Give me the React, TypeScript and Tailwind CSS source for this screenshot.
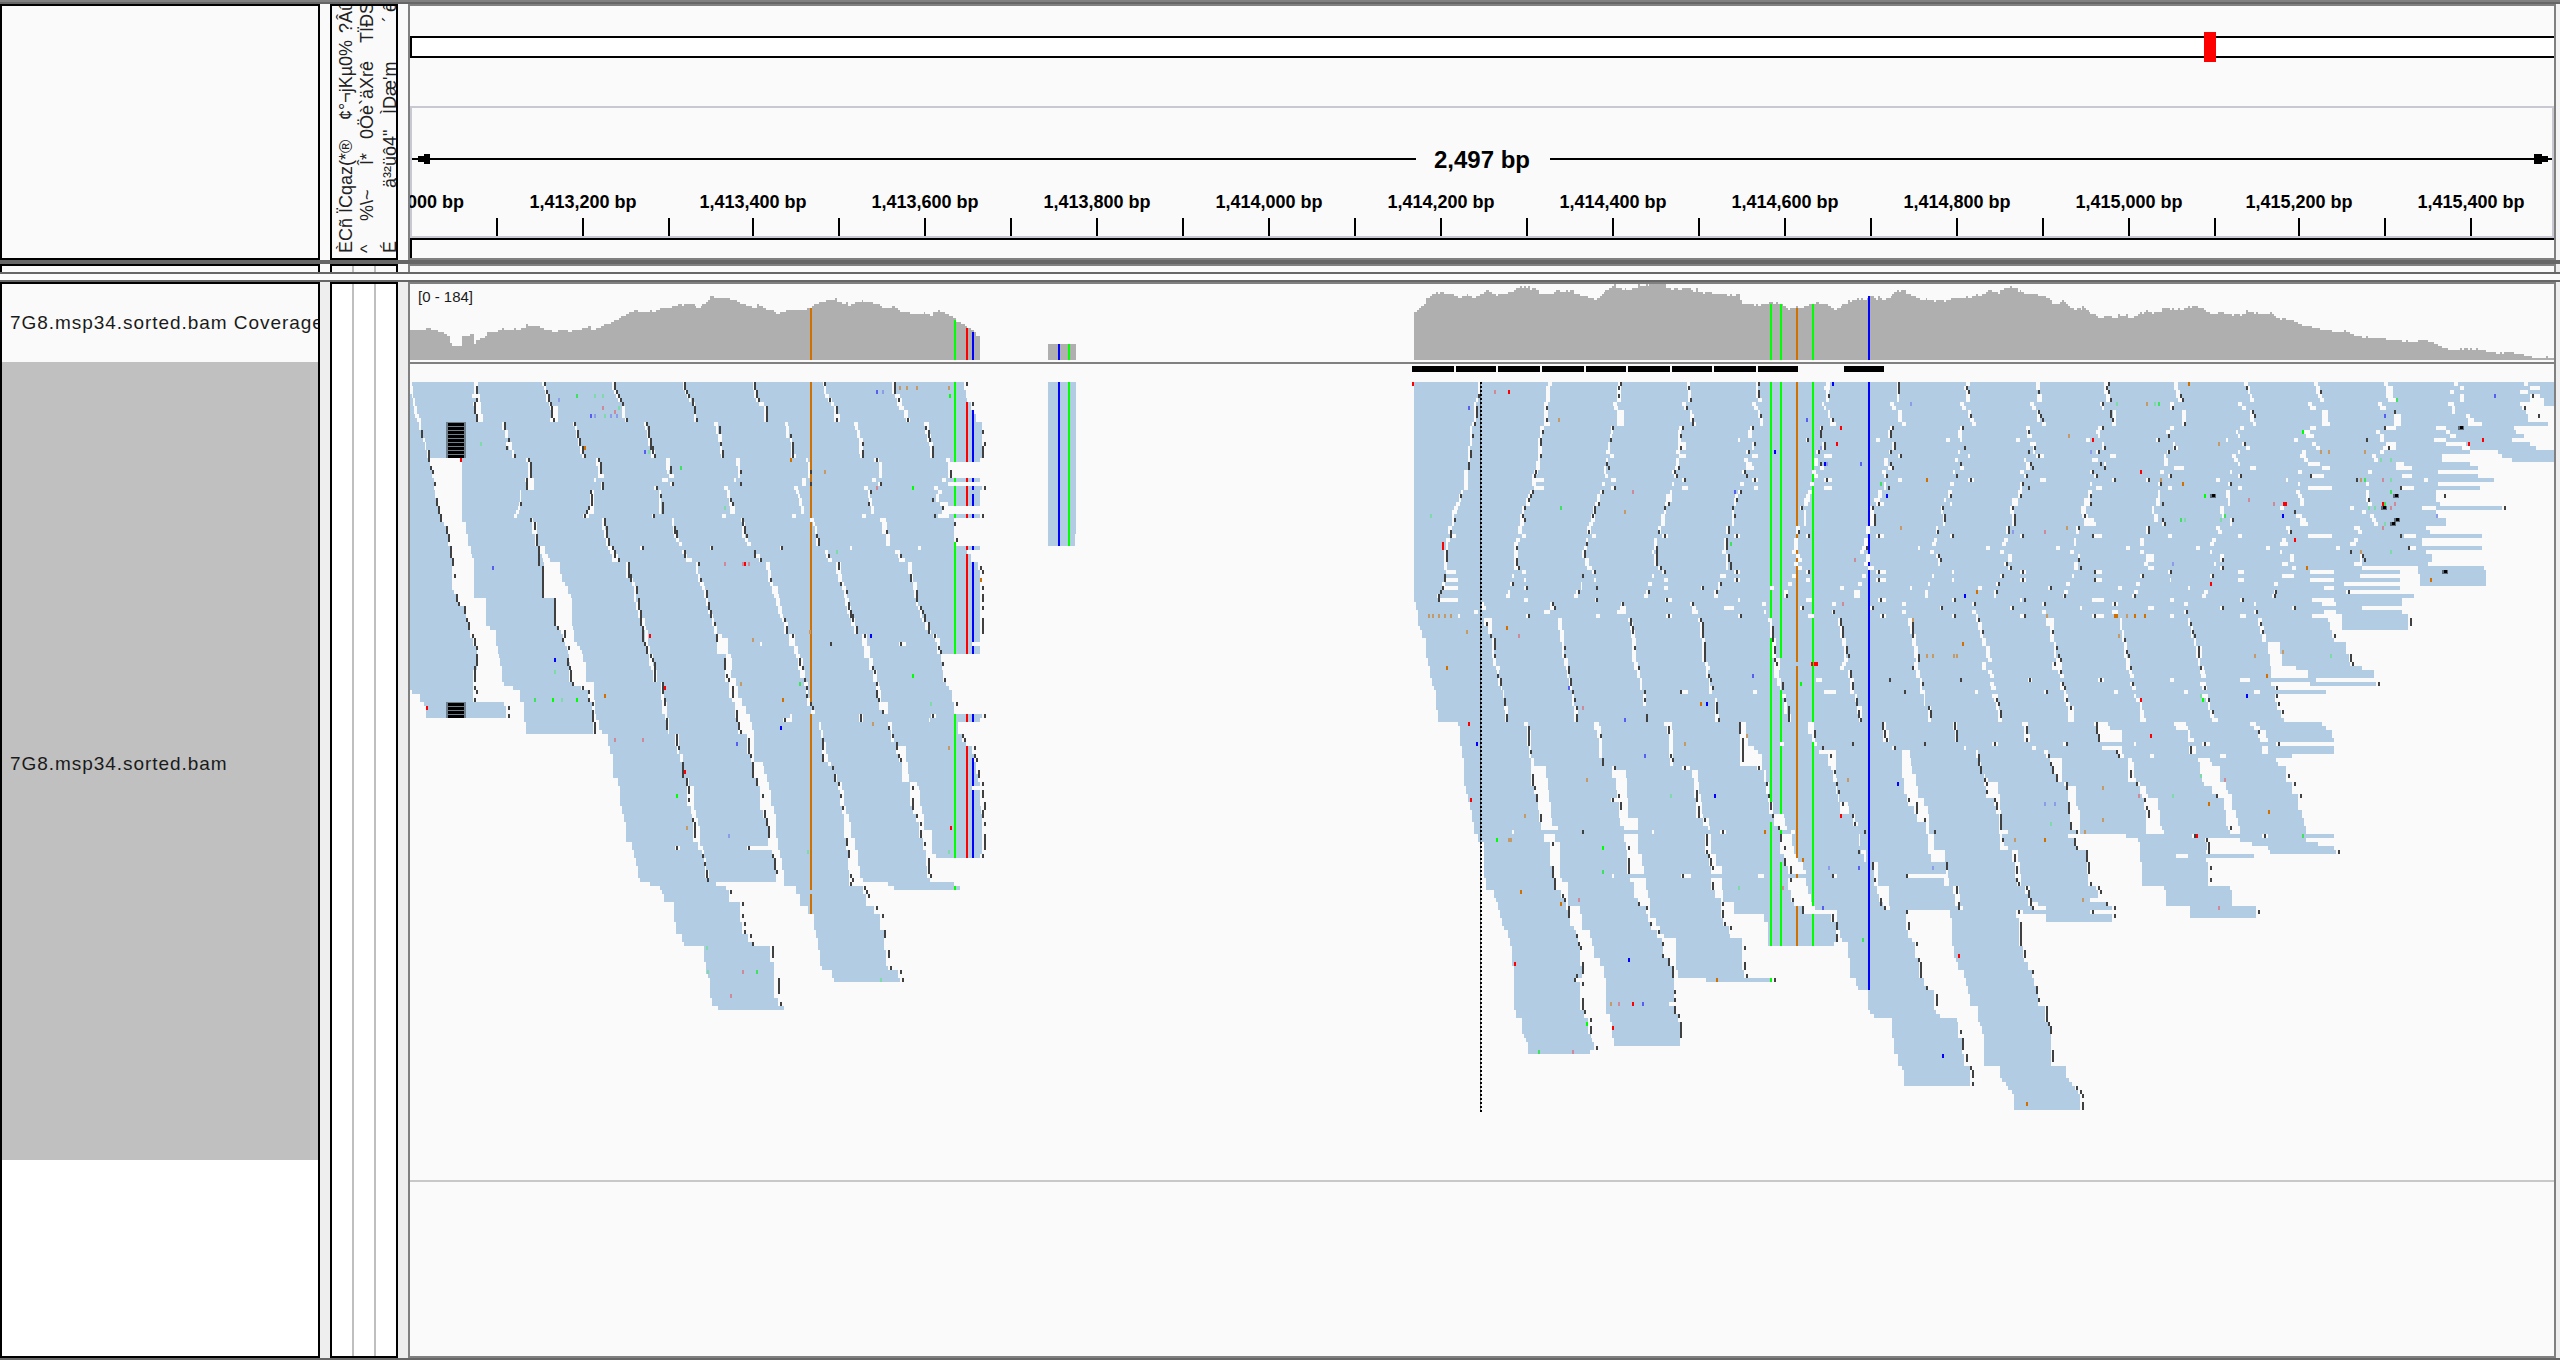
import React from "react";

/* A tile is a piece of the genome window with its own origin and scale. */
type Tile = { x: number; y: number; s: number };
const A: Tile = { x: 400, y: 270, s: 2.24 };
const B: Tile = { x: 400, y: 640, s: 2.24 };
const C: Tile = { x: 1390, y: 270, s: 1568 / 600 };
const D: Tile = { x: 1390, y: 650, s: 2.24 };
const E: Tile = { x: 1960, y: 270, s: 1568 / 600 };
const F: Tile = { x: 1960, y: 640, s: 1568 / 600 };

const nums = (s: string) => (s.match(/\d+/g) || []).map(Number);
const px = (t: Tile, v: number) => Math.round(t.x + v / t.s);
const py = (t: Tile, v: number) => Math.round(t.y + v / 3);
const rect = (x0: number, y0: number, x1: number, y1: number) => `M${x0} ${y0}H${x1}V${y1}H${x0}Z`;

/* "y left right y left right ... yEnd", several runs split by "|" */
const bands = (t: Tile, src: string) =>
  src
    .split("|")
    .map((run) => {
      const n = nums(run);
      let d = "";
      for (let i = 0; i + 3 < n.length; i += 3) {
        if (n[i + 2] > n[i + 1]) d += rect(px(t, n[i + 1]), py(t, n[i]), px(t, n[i + 2]), py(t, n[i + 3]));
      }
      return d;
    })
    .join("");

/* "x y height ..." two pixel wide marks centred on x */
const ticks = (t: Tile, src: string) => {
  const n = nums(src);
  let d = "";
  for (let i = 0; i + 2 < n.length; i += 3) {
    const x = px(t, n[i]) - 1;
    d += rect(x, py(t, n[i + 1]), x + 2, py(t, n[i + 1] + n[i + 2]));
  }
  return d;
};

/* "x top x top ... xEnd" histogram standing on y = 360 */
const hist = (t: Tile, src: string) => {
  const n = nums(src);
  let d = "";
  for (let i = 0; i + 2 < n.length; i += 2) d += rect(px(t, n[i]), py(t, n[i + 1]), px(t, n[i + 2]), 360);
  return d;
};

const coverage =
  hist(A, "22 180 58 175 70 180 85 186 98 192 105 198 112 220 116 228 139 198 156 193 166 222 170 210 180 204 190 198 194 186 220 180 229 174 234 180 256 174 260 180 270 174 282 163 287 168 314 174 323 180 341 186 354 180 377 186 386 180 408 174 422 168 427 180 440 174 450 168 458 162 472 156 480 150 490 144 495 138 507 132 513 126 524 120 533 126 560 120 565 126 573 120 582 114 610 108 623 102 632 108 636 102 660 108 663 114 674 108 677 102 686 96 690 90 695 78 703 84 740 90 755 96 762 102 776 108 789 114 800 102 805 108 812 114 820 120 838 126 843 132 852 126 865 120 911 114 922 108 928 102 938 96 955 90 975 84 978 96 990 102 1000 96 1003 108 1010 102 1020 96 1034 90 1038 96 1060 102 1076 108 1080 114 1103 108 1108 114 1116 120 1121 126 1142 132 1173 126 1177 132 1188 138 1195 126 1205 120 1210 126 1220 132 1230 138 1238 144 1245 156 1256 162 1265 168 1270 174 1278 180 1286 186 1290 198 1299") +
  hist(A, "1452 222 1514") +
  hist(C, "63 126 70 120 75 114 80 108 90 102 95 84 105 78 110 72 120 66 125 72 131 66 140 72 167 78 178 84 188 78 200 72 204 78 215 84 225 78 235 72 245 66 252 60 260 66 266 72 277 78 282 72 308 66 325 60 330 54 340 48 345 54 350 48 355 54 360 48 365 60 372 54 381 60 390 72 428 66 435 60 444 66 461 60 465 66 470 60 481 72 497 78 517 84 533 90 540 84 548 78 555 72 558 66 562 60 572 54 580 48 585 42 590 54 605 60 613 54 618 60 632 54 648 42 653 48 668 42 673 48 677 42 721 54 735 60 742 54 752 60 763 54 787 60 793 66 800 54 806 66 818 72 823 66 842 72 880 78 888 72 893 78 905 72 914 90 920 102 950 108 956 102 961 108 970 102 990 96 1000 102 1008 96 1015 102 1027 108 1034 114 1040 120 1045 114 1060 108 1066 114 1083 108 1095 102 1112 96 1120 102 1145 108 1153 114 1160 120 1167 114 1178 108 1181 102 1197 90 1202 96 1208 90 1220 84 1225 90 1232 84 1236 90 1246 84 1254 78 1265 84 1270 90 1275 78 1280 84 1286 90 1295 84 1308 78 1313 72 1318 66 1325 60 1330 66 1335 60 1348 72 1362 78 1375 84 1386 90 1400 84 1404 90 1422 96 1427 90 1448 96 1454 90 1465 84 1490") +
  hist(E, "0 84 16 78 21 84 32 78 42 72 47 78 58 72 69 66 74 60 83 66 98 72 105 60 115 54 131 48 136 54 151 66 157 60 159 66 168 72 204 78 225 84 235 90 240 102 262 96 267 90 272 96 278 102 282 108 288 114 299 120 305 114 315 120 320 108 325 114 330 120 336 126 341 132 355 138 361 144 377 138 398 144 413 132 418 138 434 132 439 144 455 138 465 132 471 126 476 132 481 126 486 120 491 126 502 132 507 126 528 114 550 120 555 114 560 120 570 114 576 120 586 114 597 108 602 114 607 108 622 114 638 120 643 126 653 132 673 126 690 132 711 138 717 132 732 138 738 132 747 120 753 126 768 132 773 126 778 132 810 126 815 132 821 138 826 144 836 150 841 144 852 150 873 156 883 162 894 168 920 174 941 180 972 186 1003 180 1009 186 1019 192 1030 198 1050 204 1062 198 1066 204 1113 210 1155 216 1166 210 1171 216 1197 210 1223 216 1238 222 1249 228 1260 234 1275 240 1307 234 1312 240 1317 234 1328 240 1333 234 1338 240 1349 234 1354 240 1375 246 1401 252 1411 246 1416 252 1422 246 1448 252 1474 258 1495 264 1532 258 1537 264 1552");

const reads =
  bands(A, "336 22 1264 360 22 1267 384 22 1270 396 22 1278 420 22 1286 432 22 1290 456 22 1304 564 22 1299 576 22 1230 624 22 1299 636 22 1228 648 22 1304 660 22 1299 708 22 1213 732 22 1299 744 22 1240 816 22 1245 828 22 1299 840 22 1270 852 22 1278 876 22 1295 900 22 1299 1116 22 1281 1128 22 1299 1152 22 1212 1176 22 1215 1200 | 336 1452 1514 792 1452 1511 828") +
  bands(B, "90 22 163 150 27 163 162 45 163 186 54 233 198 58 237 234 | 90 228 379 126 233 388 138 254 405 150 269 420 186 278 430 246 282 432 282") +
  bands(B, "90 417 567 126 435 585 180 437 587 222 440 594 240 445 598 270 452 600 282 466 616 318 470 621 342 478 628 366 478 632 414 488 641 438 492 643 498 497 652 522 502 654 546 506 656 606 520 668 630 524 676 654 529 680 678 533 684 714 538 690 726 560 708 738 582 730 750 587 738 762 591 738 786 614 762 846 618 767 882 632 780 906 636 789 918 681 829 966 686 838 1002 691 838 1014 694 838 1074 699 847 1098 712 860 1110") +
  bands(B, "90 576 728 126 591 738 174 596 744 186 598 751 234 602 756 282 625 778 342 635 786 366 636 788 414 648 799 438 659 806 510 663 813 534 668 820 558 672 824 618 678 777 630 682 833 654 686 837 690 693 842 726") +
  bands(B, "90 742 897 114 752 905 138 757 909 174 765 912 198 774 920 222 783 930 246 788 938 270 793 942 294 793 945 366 812 958 378 815 967 402 822 972 426 826 981 450 831 986 498 838 990 522 842 994 594 847 999 630 851 1003 654 856 1003 690 860 1005 738 887 1036 762 896 1044 798 914 1062 822 927 1075 870 932 1084 894 936 1084 930 941 1089 978 945 1093 990 968 1116 1014 972 1120 1026") +
  bands(B, "90 908 1060 126 914 1066 174 920 1072 210 930 1081 246 942 1092 270 948 1099 306 954 1110 342 959 1118 366 966 1124 402 978 1124 426 991 1142 450 995 1143 498 1000 1150 522 1006 1156 546 1011 1163 594 1020 1172 630 1026 1178 678 1030 1181 714 1038 1187 726 1093 1241 738 1107 1254 750") +
  bands(B, "90 1068 1216 126 1072 1224 138 1076 1230 150 1078 1236 186 1093 1240 222 1070 1304 234 1070 1299 246 1101 1250 282 1106 1258 306 1115 1268 318 1133 1281 342 1133 1286 366 1138 1290 402 1140 1295 426 1157 1299 438 1162 1281 450 1164 1299 498 1170 1302 522 1174 1304 570 1192 1304 642 1201 1299 654") +
  bands(C, "336 63 1490 996 68 1490 1020 73 1490 1068 79 1490 1080 84 1490 1104 94 1490 1164 99 1490 1188 104 1490 1200") +
  bands(D, "60 89 239 84 94 243 108 99 249 120 103 252 144 103 256 180 108 258 216 152 301 228 156 307 288 161 312 324 165 315 348 165 316 408 170 323 432 174 327 456 179 331 480 183 334 516 188 338 540 188 376 552 197 345 576 210 358 648 210 363 684 215 367 720 233 383 744 237 390 756 242 394 780 246 399 804 251 403 828 255 413 840 264 417 864 269 421 888 273 426 948 278 430 984 278 412 996 278 426 1080 282 434 1104 296 443 1152 300 450 1164 305 453 1176 309 457 1200 309 448 1212") +
  bands(D, "60 245 396 84 250 400 120 256 408 168 264 413 216 310 458 240 315 464 264 315 469 324 322 474 348 349 498 384 354 506 420 357 508 444 357 494 456 360 512 504 362 516 528 376 525 540 362 555 552 370 524 576 380 529 600 381 530 684 386 538 696 398 546 744 399 556 768 425 573 792 429 578 816 429 584 840 447 597 864 452 610 888 456 612 924 470 624 948 480 631 984 484 636 1056 484 624 1068 484 636 1092 493 645 1116 497 650 1164 502 650 1188") +
  bands(D, "60 402 554 84 407 560 120 412 567 168 420 573 216 468 614 228 472 620 252 474 625 324 480 627 348 505 654 360 529 676 384 530 682 444 533 686 504 555 702 528 555 712 552 556 706 612 564 714 648 568 720 684 573 718 720 578 729 744 582 742 804 596 747 828 605 760 852 614 762 864 641 788 960 645 793 984 708 853 996") +
  bands(D, "60 560 708 84 565 714 132 573 728 216 632 781 240 635 785 348 672 821 360 690 838 396 692 843 432 697 847 456 699 850 492 700 856 504 714 861 528 717 870 552 720 874 612 730 882 648 743 892 684 743 892 720 747 899 756 771 905 768 771 923 792 838 988 816 847 998 876 847 995 888") +
  bands(D, "60 712 860 84 716 867 108 721 873 144 732 882 192 738 892 216 797 937 252 802 946 288 815 956 300 824 960 312 833 981 348 833 988 360 843 992 396 848 1000 432 853 1003 456 858 1008 492 883 1034 504 885 1038 528 890 1048 540 890 1060 552 901 1050 588 906 1056 612 915 1062 636 925 1079 660 931 1084 708 936 1090 732 943 1095 756 950 1104 768 953 1110 780") +
  bands(D, "216 738 781 | 216 575 614 240 575 620 252 575 625 348 | 216 420 458 240 420 464 264 420 469 324 420 474 348 420 498 360 | 216 264 301 | 216 898 937 | 540 188 940 552 | 672 386 960 684") +
  bands(D, "780 1002 1156 840 1007 1160 864 1012 1169 876 1026 1176 924 1030 1185 984 1044 1197 1008 1048 1205 1020 1071 1219 1080 1075 1224 1092 1084 1232 1104 1124 1270 1116 1124 1272 1164 1129 1281 1212 1138 1286 1248 1147 1299 1260 1151 1299 1308") +
  bands(D, "60 871 1026 84 876 1030 132 886 1042 156 890 1046 192 898 1050 216 950 1101 240 953 1104 276 957 1120 300 998 1147 384 1001 1151 432 1006 1157 456 1026 1160 468 1028 1174 492 1042 1180 516 1048 1200 552 1053 1205 600 1066 1206 612 1066 1212 636 1092 1245 672 1092 1156 684 1094 1242 708 1117 1262 732 1118 1266 768 1119 1272 780") +
  bands(D, "60 1035 1178 84 1040 1188 132 1045 1196 168 1057 1204 216 1112 1262 240 1117 1265 276 1117 1310 300 1164 1313 324 1167 1318 348 1170 1324 372 1178 1330 408 1182 1336 444 1196 1354 468 1204 1358 492 1208 1364 552 1218 1366 600 1243 1394 636 1251 1400 684 1253 1404 708 1274 1422 732 1277 1430 768 1284 1438 780 1254 1402 804 1258 1408 888 1263 1417 924 1268 1420 936 1272 1428 960 1286 1438 984 1290 1442 1008 1295 1446 1032 1299 1452 1068 1317 1468 1116 1322 1473 1128 1326 1478 1152 1331 1480 1248 1366 1514 1284 1370 1520 1296 1380 1528 1308 1384 1534 1320 1393 1542 1332 1398 1546 1380") +
  bands(D, "60 1187 1333 84 1192 1343 120 1198 1348 168 1211 1365 216 1270 1420 276 1272 1420 300") +
  bands(E, "336 0 1552 408 0 1510 432 0 1515 456 0 1536 468 0 1448 480 0 1453 492 0 1473 504 0 1443 516 0 1490 528 0 1505 540 0 1333 552 0 1260 576 0 1333 588 0 1354 600 0 1249 612 0 1354 624 0 1396 636 0 1249 648 0 1359 660 0 1244 696 0 1254 708 0 1416 720 0 1244 744 0 1270 768 0 1218 780 0 1228 792 0 1364 804 0 1208 828 0 1364 840 0 1218 852 0 1233 876 0 1223 888 0 1050 900 0 1150 912 0 1045 924 0 1150 936 0 1004 948 0 1150 960 0 1010 972 0 1186 984 0 1155 1008 0 1050 1020 0 1155 1032 0 1171 1080 0 972 1104 0 978 1116 0 1009 1152 0 1016 1176 0 1020 1188 0 1050 1200 | 540 1406 1552 552 1417 1552 564 1443 1552 576 | 888 1197 1369 900 1197 1375 912 1202 1375 948") +
  bands(F, "90 60 1082 114 60 930 126 60 1087 138 60 822 150 60 956 162 60 824 186 60 828 210 60 838 234 60 847 246 0 946 258 0 956 270 0 972 294 0 977 306 0 827 318 0 977 330 47 977 342 52 868 354 52 827 366 54 831 378 57 852 402 65 852 414 73 852 426 99 868 462 104 883 510 106 894 534 108 899 558 110 904 570 125 904 582") +
  bands(F, "582 110 283 594 116 298 618 125 304 630 152 329 666 156 331 702 159 335 738 183 356 750 184 361 774 188 340 786 204 381 798 225 397 810 165 340 822 225 397 846 | 582 434 977 594 465 640 606 470 645 630 470 643 642 470 768 654 470 643 666 476 648 738 533 706 750 538 711 798 601 774 834 | 594 732 904 606 763 936 618 805 977 630 810 983 642");

const gaps =
  bands(A, "336 22 27 348 22 28 372 26 30 384 28 33 408 31 37 432 34 43 444 37 46 456 43 48 480 46 50 504 52 57 516 55 59 540 60 65 564 68 139 600 72 139 624 76 139 660 79 139 684 83 139 708 87 139 732 92 139 756 99 148 768 103 148 792 108 152 828 113 159 852 115 161 864 118 166 888 116 166 960 121 166 972 126 166 984 130 193 996 134 193 1008 144 193 1032 148 193 1056 152 193 1068 157 202 1080 157 215 1104 163 215 1128 172 220 1152 175 222 1164 175 224 1188 172 228 1200") +
  bands(A, "336 166 175 348 166 170 372 161 179 384 170 179 396 163 181 408 170 181 432 170 187 456 229 235 480 236 242 504 241 246 516 238 250 528 245 250 540 250 255 564 283 291 576 287 292 624 281 300 636 287 300 660 268 272 696 266 273 708 264 269 720 260 266 732 255 261 744 292 298 756 296 306 792 303 309 828 310 325 852 318 332 864 320 335 876 323 358 912 323 363 936 323 370 948 323 376 972 323 382 984 344 385 1068 352 388 1080 360 390 1092 366 390 1116 370 396 1128 374 404 1140 376 408 1152 378 411 1176 381 417 1200") +
  bands(A, "336 318 328 348 322 327 360 325 331 372 326 336 396 333 341 408 337 354 420 343 354 444 337 354 456 387 395 468 391 397 480 395 399 504 399 403 528 403 408 552 407 417 564 440 447 588 443 452 612 443 457 624 434 439 636 450 457 660 426 434 684 426 435 708 421 434 732 410 423 744 453 459 780 457 463 804 462 471 828 466 476 840 471 480 852 474 489 876 506 510 924 515 523 936 520 526 948 524 529 996 529 533 1020 533 537 1044 543 548 1068 547 552 1080 549 556 1128 556 560 1152 558 567 1188 562 570 1200") +
  bands(A, "336 475 480 360 479 484 372 484 488 384 489 494 396 497 502 408 497 505 444 504 509 456 547 552 468 549 554 480 553 558 504 556 561 528 560 565 540 563 572 564 596 604 600 598 603 612 602 614 624 587 600 636 605 609 648 570 573 660 580 585 732 564 568 744 609 614 768 612 617 792 614 619 804 619 624 816 624 632 828 537 541 840 632 640 852 636 643 864 641 654 876 663 668 912 667 672 936 671 680 948 677 683 960 682 686 984 685 690 1008 689 695 1032 694 700 1044 699 704 1068 703 709 1092 712 721 1104 710 735 1152 731 742 1164 731 744 1200") +
  bands(A, "336 633 638 348 635 640 360 639 644 372 643 648 384 647 652 396 655 660 408 658 663 456 703 713 468 708 712 492 712 721 516 716 722 552 719 726 564 753 761 588 757 761 624 749 753 636 762 766 648 726 735 660 732 740 684 736 743 708 740 750 732 722 730 744 764 768 756 767 773 804 772 780 816 778 787 828 694 697 840 792 798 852 797 806 864 805 810 876 820 828 900 824 830 936 829 835 948 834 847 972 838 848 984 842 852 1008 847 856 1032 851 859 1044 855 864 1056 860 870 1092 872 884 1128 883 892 1152 888 895 1164 892 903 1200") +
  bands(A, "336 790 794 360 793 797 384 798 806 396 805 815 408 815 820 456 862 870 468 865 872 504 873 877 516 875 880 552 876 886 564 910 914 576 914 918 624 900 909 648 883 892 660 888 894 672 892 897 684 894 900 708 898 905 732 878 887 744 918 927 756 925 930 768 929 934 792 932 937 828 851 855 840 951 959 852 955 963 864 959 967 876 977 988 912 982 990 936 986 995 948 990 999 960 995 1001 984 997 1006 1008 1001 1010 1032 1006 1014 1044 1010 1019 1068 1018 1026 1092 1034 1046 1128 1040 1052 1164 1050 1060 1200") +
  bands(A, "336 947 952 348 950 955 372 953 961 384 958 967 396 965 972 408 972 982 432 972 986 456 1017 1026 468 1020 1027 480 1024 1031 504 1028 1036 552 1031 1040 564 1062 1072 576 1072 1080 624 1057 1066 636 1070 1075 648 1039 1048 660 1048 1053 684 1050 1057 708 1054 1062 732 1035 1044 744 1076 1089 756 1080 1090 792 1089 1097 828 1007 1012 840 1108 1121 852 1116 1122 864 1117 1131 876 1139 1147 912 1142 1150 936 1148 1157 960 1151 1157 984 1156 1161 1008 1160 1166 1020 1164 1170 1044 1170 1176 1056 1177 1182 1080 1184 1190 1092 1194 1202 1104 1198 1210 1116 1202 1210 1152") +
  bands(A, "336 1102 1107 372 1108 1121 384 1114 1125 408 1118 1130 420 1130 1138 444 1134 1142 456 1174 1184 468 1176 1184 492 1181 1189 516 1186 1193 528 1188 1196 564 1224 1233 576 1228 1233 624 1214 1222 636 1228 1299 648 1197 1206 660 1204 1213 672 1200 1208 696 1210 1228 708 | 828 1160 1168 840 | 1116 1118 1133 1128 | 1116 806 811 1128 | 732 1204 1230 744") +
  bands(B, "618 784 829 630 | 222 874 878 234 858 878 246 | 222 1028 1036 246 | 222 1190 1200 234 1184 1188 246 | 618 616 627 630") +
  bands(C, "336 230 235 384 225 230 396 220 226 444 219 224 456 214 220 468 210 215 504 209 214 528 204 210 564 203 208 600 193 203 648 193 204 660 185 192 672 180 186 696 173 183 708 167 178 720 162 175 732 162 168 768 152 162 792 157 172 804 147 157 816 146 152 840 142 148 900 146 172 912 140 144 924 146 178 936 135 143 948 138 178 960 130 135 972 122 130 984 131 178 996 240 245 1008 240 250 1020 220 230 1032 178 183 1044 246 267 1068 256 266 1092 261 267 1104 267 273 1164 270 278 1188 277 287 1200") +
  bands(C, "336 412 423 348 408 418 396 402 412 432 403 413 456 402 418 468 392 402 480 392 397 504 387 397 564 387 392 572 382 392 600 376 387 612 371 382 624 371 402 636 371 382 648 376 402 660 365 371 672 361 371 684 356 366 708 345 351 732 340 350 768 335 345 792 345 355 804 330 340 816 324 335 888 324 340 900 345 355 912 319 324 924 350 355 936 313 319 948 350 355 960 308 313 972 303 313 984 350 361 996 418 423 1008 418 430 1020 402 418 1032 355 361 1044 439 450 1080 444 455 1116 450 455 1164 455 465 1188 460 468 1200") +
  bands(C, "336 597 605 348 592 603 396 582 592 408 586 597 420 592 612 468 577 583 492 575 580 516 570 575 540 564 575 552 576 586 564 564 570 588 559 565 612 562 570 624 577 591 636 555 562 648 577 591 660 550 556 672 540 550 696 535 545 708 530 535 732 524 535 756 519 530 768 514 524 792 528 538 804 512 518 828 507 515 840 503 508 864 509 519 888 514 528 900 528 538 912 502 507 924 533 538 936 499 503 960 487 492 972 482 492 984 535 543 996 603 610 1008 602 617 1020 592 617 1032 538 549 1044 622 629 1056 627 634 1080 629 640 1104 632 642 1176 637 648 1200") +
  bands(C, "336 776 784 360 780 786 396 763 774 408 768 778 420 783 789 432 784 795 456 790 800 468 756 763 480 752 760 516 752 773 540 748 757 552 756 773 564 748 754 588 746 757 600 737 743 612 742 752 624 762 768 636 736 742 648 763 778 660 732 737 672 721 737 696 719 731 708 715 721 732 707 719 768 701 707 792 712 727 804 690 697 840 685 691 852 690 696 888 701 712 900 711 721 912 685 690 924 716 726 936 674 685 948 716 726 960 669 675 972 664 674 984 719 736 996 784 790 1008 790 799 1020 790 805 1032 721 737 1044 806 815 1056 811 817 1104 816 822 1176 822 832 1188 826 837 1200") +
  bands(C, "336 956 962 384 961 971 396 946 956 408 951 961 420 961 966 444 966 976 468 941 946 480 936 946 504 909 914 516 945 950 540 930 935 552 946 962 564 925 936 576 930 945 588 930 950 600 920 930 612 930 936 624 945 962 636 915 925 648 951 962 660 910 916 672 901 909 684 899 903 708 893 899 768 878 883 792 899 914 804 873 878 840 868 878 852 878 883 900 899 914 912 862 878 924 899 914 936 857 863 960 847 857 984 909 914 996 972 982 1008 873 899 1020 977 982 1032 909 914 1044 988 998 1056 993 998 1104 998 1008 1164 1003 1018 1200 | 948 993 1003 960 | 948 812 820 960") +
  bands(C, "336 1140 1150 348 1135 1150 360 1140 1146 396 1129 1134 408 1135 1140 420 1145 1151 444 1151 1160 456 1151 1165 468 1124 1130 504 1087 1092 516 1129 1135 540 1114 1120 552 1135 1155 564 1108 1119 588 1124 1134 600 1103 1113 612 1108 1119 624 1135 1155 636 1098 1108 648 1134 1155 660 1093 1103 672 1087 1098 684 1082 1098 696 1082 1093 708 1072 1077 720 1081 1087 768 1061 1071 792 1087 1097 804 1056 1066 840 1051 1061 852 1061 1071 864 1066 1077 876 1056 1066 888 1066 1077 900 1088 1098 912 1051 1061 924 1088 1098 936 1040 1051 948 1175 1186 960 1030 1040 984 1087 1103 996 1156 1166 1008 1072 1078 1020 1155 1160 1032 1092 1108 1044 1171 1177 1068 1175 1181 1104 1182 1192 1128 1187 1192 1164 1187 1197 1176 1182 1192 1188 1177 1187 1200") +
  bands(C, "336 1325 1330 396 1307 1318 408 1313 1323 420 1328 1339 456 1339 1349 468 1307 1312 480 1302 1308 504 1270 1281 516 1312 1320 540 1303 1310 552 1328 1334 564 1291 1301 588 1302 1312 600 1286 1296 612 1291 1299 624 1328 1338 636 1291 1296 660 1275 1286 684 1265 1281 696 1270 1290 708 1255 1266 768 1244 1255 792 1270 1290 804 1239 1250 828 1234 1245 840 1228 1239 852 1244 1255 876 1239 1249 888 1250 1265 900 1270 1296 912 1234 1244 924 1270 1296 936 1223 1234 948 1360 1365 960 1213 1228 984 1275 1296 996 1338 1349 1008 1255 1261 1020 1338 1349 1032 1281 1296 1044 1354 1365 1068 1359 1364 1092 1365 1375 1128 1370 1380 1164 1375 1386 1176 1370 1380 1200") +
  bands(C, "480 1484 1492 504 1453 1463 516 | 540 1484 1490 552 | 564 1476 1484 576 | 600 1470 1476 612 | 636 1463 1473 648 | 660 1458 1468 684 1448 1453 696 1463 1468 708 1440 1446 732 1445 1450 768 1427 1433 792 1464 1474 804 1422 1430 816 1416 1427 828 1380 1385 840 1411 1422 852 1427 1433 864 1432 1438 888 | 900 1469 1474 912 1416 1421 924 1469 1474 936 1406 1411 948 | 960 1398 1406 984 1469 1474 996 | 1008 1437 1442 1020 | 1032 1469 1474 1044") +
  bands(D, "120 655 667 132 | 120 814 823 132 | 120 972 998 132 | 84 954 967 96 | 276 873 882 288 | 540 273 278 552 | 540 586 591 552 | 540 740 752 552 | 540 899 908 552 | 672 497 502 684 | 672 652 675 684 | 672 824 837 684 | 300 960 998 312 | 288 1124 1130 300 | 672 989 1002 684") +
  bands(E, "336 1474 1484 348 1490 1516 360 1463 1484 372 1490 1515 384 1490 1526 396 1463 1526 408 1468 1510 420 1479 1512 432 1484 1515 456") +
  bands(E, "336 1291 1301 348 1307 1317 360 1281 1291 372 1307 1317 396 1275 1291 408 1286 1294 432 1323 1333 444 1328 1343 456 1328 1364 468 1244 1270 480 1270 1281 492 1281 1296 504 1239 1270 516 1270 1323 528 1312 1333 540") +
  bands(E, "336 1108 1119 348 1113 1132 384 1119 1139 396 1092 1103 408 1098 1113 420 1134 1140 432 1134 1152 468 1113 1140 480 1087 1098 492 1098 1108 516 1113 1140 528 1105 1139 540 1098 1108 552 1077 1088 564 1082 1093 576 1139 1160 588 1140 1181 600 1066 1077 612 1155 1181 624 1213 1223 636 1061 1070 648 1155 1186 660 1061 1070 696 1066 1077 708 1019 1030 720 1050 1061 732 1072 1082 744 1077 1087 756 1082 1092 768 1030 1046 780 1040 1051 792 1160 1192 804 1030 1040 816 1019 1035 828 1177 1192 840 1019 1024 852 1046 1051 876 1030 1051 888 | 708 1207 1244 720") +
  bands(E, "336 925 936 348 930 941 372 936 946 384 941 951 396 909 920 408 915 930 420 946 962 456 946 967 468 915 930 480 899 915 492 904 925 504 873 883 516 920 930 528 930 941 540 894 904 552 889 904 564 899 909 576 909 941 588 946 967 600 883 894 612 915 951 624 852 857 636 883 889 648 909 972 660 878 889 672 883 894 684 889 899 708 836 847 720 873 878 732 878 894 744 889 904 756 889 909 768 852 862 780 857 867 792 909 972 804 841 852 816 836 857 828 800 810 840 836 841 852 862 873 876 841 857 888 868 878 900 915 977 912 841 873 924 915 977 936 821 831 948 951 977 960 821 826 972 816 826 984 920 977 996 946 982 1008 868 873 1020 951 982 1032 920 998 1044 962 998 1056 967 998 1080 | 828 983 993 840") +
  bands(E, "336 742 753 348 752 758 372 757 763 384 757 768 396 727 737 408 737 747 420 758 768 456 766 773 468 732 742 480 721 727 492 726 732 504 695 700 516 737 742 528 747 757 540 727 732 552 711 721 564 716 727 576 726 732 588 758 773 600 706 711 612 727 732 624 669 680 636 700 706 648 727 737 660 695 706 684 700 706 708 680 690 732 685 695 744 706 711 768 669 680 780 674 685 792 727 737 804 659 669 816 653 664 828 617 627 840 653 658 852 680 690 876 664 669 888 680 690 900 727 742 912 653 659 924 727 742 936 653 658 948 596 601 960 638 648 972 633 643 984 732 737 996 768 773 1008 680 685 1020 768 774 1032 732 747 1044 779 789 1068 784 794 1092 789 799 1116 805 836 1152 810 841 1188 814 878 1200") +
  bands(E, "336 560 570 360 565 575 384 570 580 396 549 560 408 550 556 420 580 591 468 549 560 480 539 549 492 544 550 504 513 520 516 556 561 528 556 570 540 540 549 552 533 539 564 534 544 588 560 586 600 523 533 612 544 549 624 487 493 636 518 523 648 544 555 660 518 523 684 513 523 708 502 507 732 507 518 756 528 534 768 487 493 792 544 555 804 471 481 828 434 445 840 471 481 852 486 507 876 481 491 888 492 507 900 544 551 912 471 477 924 549 552 936 460 471 948 413 424 960 455 466 972 450 456 984 549 560 996 586 597 1008 492 507 1020 586 592 1032 549 560 1044 597 601 1068 603 608 1104 612 618 1128 618 632 1164 622 628 1188 627 638 1200") +
  bands(E, "336 376 386 372 381 391 396 366 374 408 371 377 420 399 408 456 397 408 468 361 373 480 356 366 492 361 366 504 330 341 516 371 376 540 356 362 552 392 408 564 345 361 576 376 381 600 341 346 612 351 356 624 398 403 636 339 345 648 356 371 660 335 345 684 325 340 708 315 330 732 320 335 744 325 350 756 325 355 768 304 311 792 345 371 804 297 303 828 250 261 840 287 298 852 308 313 876 298 308 900 350 371 912 292 298 924 350 371 936 276 287 948 230 235 960 272 282 972 268 276 984 345 376 996 397 413 1008 313 318 1020 397 413 1032 345 376 1044 418 423 1080 424 429 1116 429 437 1164 434 445 1200") +
  bands(E, "336 198 208 360 204 209 372 200 213 396 183 193 408 188 198 420 200 208 456 214 224 468 173 183 480 174 178 492 176 188 504 146 157 516 183 199 528 190 196 552 199 219 564 167 173 576 173 184 600 157 167 612 168 173 624 209 225 636 157 163 660 152 162 684 136 152 708 131 141 732 136 141 768 121 126 792 157 163 804 115 125 816 110 120 828 68 78 840 105 115 852 125 136 876 115 121 888 126 131 900 157 172 912 105 111 924 157 172 936 95 101 948 47 57 960 90 95 984 157 163 996 214 220 1008 131 136 1020 214 226 1032 157 168 1044 226 245 1068 235 245 1116 245 250 1164 250 266 1176 240 266 1200") +
  bands(E, "336 16 26 348 10 16 360 15 25 396 0 10 408 5 16 420 20 28 444 26 36 456 31 41 468 0 5 504 0 5 516 | 552 21 26 564 | 588 0 10 600 | 624 20 36 636 | 996 32 37 1008 | 1020 32 42 1032 42 47 1056 47 57 1080 52 60 1104 57 67 1128 67 78 1164 73 83 1176 57 68 1200") +
  bands(F, "90 73 83 102 78 88 114 | 126 78 88 138 80 93 150 38 46 162 84 98 174 90 96 186 94 103 210 99 104 234 99 109 246 | 318 10 15 330 42 47 342 | 114 178 188 126 | 150 220 226 162") +
  bands(F, "90 256 261 102 261 271 114 | 126 262 272 150 271 276 162 272 282 186 276 287 198 282 298 246 163 178 258 168 178 282 168 183 306 270 276 318 188 199 330 220 230 342 225 235 354 235 267 378 246 267 402 256 267 426 272 282 438 282 303 498 287 308 510 287 314 546 293 314 570 309 314 582 | 306 84 98 318") +
  bands(F, "90 441 450 102 445 455 114 361 376 126 445 455 138 450 460 150 402 413 162 455 461 174 460 471 186 471 476 210 471 481 234 471 486 246 350 387 258 361 392 270 361 423 306 455 460 318 371 423 330 408 423 342 418 428 354 439 450 366 440 455 414 439 461 426 465 471 438 471 486 462 476 490 474 481 517 510 486 522 558 486 527 570 486 533 582") +
  bands(F, "90 627 640 102 629 643 114 550 560 126 627 643 138 633 645 150 586 596 162 632 648 174 643 650 186 648 653 210 653 664 234 659 674 246 560 591 258 565 596 270 597 602 294 597 612 306 632 653 318 598 617 342 497 507 354 622 653 366 627 658 378 627 679 402 633 679 426 638 695 438 658 695 450 659 700 462 674 711 474 690 711 510 695 721 534 695 727 558 700 732 570 706 732 582 607 619 594 | 342 679 695 354 | 642 564 596 654 | 582 789 804 594") +
  bands(F, "90 814 909 114 732 758 126 814 915 138 | 150 768 784 162 | 246 758 773 258 768 784 270 778 799 294 784 804 306 | 318 789 804 342");

const clips =
  ticks(A, "50 480 24 65 540 36 70 588 12 74 600 12 78 636 12 83 684 24 88 708 24 92 732 24 106 768 24 110 792 24 114 828 36 119 864 24 123 912 12 128 972 24 132 996 12 146 1008 24 150 1044 12 155 1056 24 164 1092 12 168 1104 24 173 1128 12 172 1152 36 168 1188 12 172 348 24 172 384 12 168 396 36 173 432 24 235 456 24 244 504 12 240 528 12 257 552 12 289 564 12 294 576 48 285 624 36 271 696 12 294 744 12 303 756 24 307 792 36 312 828 60 320 888 96 347 984 84 355 1068 12 369 1080 24 365 1104 12 378 1128 12 377 1164 24 381 1188 12 324 336 12 329 360 12 333 372 24 338 396 12 341 408 36 345 444 12 391 456 12 399 480 24 404 504 24 409 528 24 414 552 12 446 564 12 450 576 36 454 636 24 428 660 12 430 672 36 423 708 12 418 720 12 414 732 12 459 744 24 463 768 36 468 804 24 477 828 12 482 840 24 490 864 12") +
  ticks(A, "512 876 48 517 912 24 530 948 24 535 984 36 540 1020 48 545 1068 48 549 1116 12 553 1128 24 563 1152 12 567 1164 12 571 1176 24 482 336 24 486 360 12 490 372 12 495 384 12 499 396 12 508 444 12 553 456 12 558 468 36 562 504 36 567 528 24 571 552 12 607 588 24 611 636 12 575 648 12 584 672 12 589 696 36 570 732 12 616 768 24 620 780 24 638 840 24 544 828 12 699 828 12 856 828 12 670 876 12 674 924 12 687 960 24 692 996 24 697 1020 24 705 1056 12 710 1092 24 728 1164 36 638 336 24 642 360 12 647 372 12 656 384 24 660 408 24 665 444 12 716 468 24 719 516 12 723 540 24 764 600 12 764 636 12 741 684 12 746 696 12 768 744 24 773 768 24 777 792 12 796 840 24 808 864 12") +
  ticks(A, "830 924 12 862 1044 12 867 1068 24 881 1092 12 897 1164 24 902 1188 12 795 336 24 799 360 24 804 384 12 822 408 48 875 492 12 881 516 48 920 600 12 920 636 12 934 792 12 938 804 24 960 852 12 984 876 24 988 936 12 1001 960 12 1006 996 24 1010 1020 24 1015 1032 24 1024 1068 24 1041 1092 12 1060 1188 12 965 1116 12 951 336 12 964 384 12 978 408 24 978 444 12 1036 516 12 1036 540 24 1068 564 12 1077 636 12 1055 660 12 1051 696 12 1090 780 12 1122 852 12 1144 912 24 1157 960 36 1166 1008 12 1171 1020 12 1175 1032 24 1184 1056 36 1198 1092 12 1207 1128 12 1211 1140 12 1216 1176 12 1108 336 36 1117 384 12 1139 444 12 1122 1116 12 1179 468 12 1184 480 24 1188 504 12 1193 528 36 1193 684 12 1234 600 24 1216 708 12 1198 732 12 1243 756 12 1247 804 12 1270 336 12 1284 396 12 1306 480 12 1311 516 12 1306 528 36 1311 648 12 1306 732 12 1301 888 12 1306 900 12 1306 948 12 1306 972 24 1306 1008 12 1306 1044 48") +
  ticks(B, "168 90 36 168 138 12 173 150 12 168 174 12 244 198 12 244 222 12 382 90 36 387 126 12 409 138 12 423 150 12 423 174 12 432 186 12 432 210 36 437 246 36 571 90 36 589 126 36 593 174 24 598 234 36 620 282 36 625 318 12 633 366 48 642 414 24 647 438 24 647 474 12 657 534 12 661 546 48 620 618 12 679 642 12 683 666 12 687 690 24 691 714 12 741 750 12 768 786 12 768 822 12 772 846 12 772 870 12 786 882 12 790 906 12 835 918 36 849 1014 48 853 1086 12 732 102 12 736 114 12 745 138 36 755 210 36 759 246 24 764 270 12 782 294 48 786 342 12 790 366 48 799 414 24 813 462 12 817 510 24 822 534 24 826 558 36 781 618 12 835 642 12 840 654 36 844 690 12") +
  ticks(B, "907 114 12 911 138 12 911 162 12 920 186 12 925 198 12 862 234 12 947 294 36 947 342 24 970 378 12 974 402 24 984 426 12 988 462 12 992 498 12 1001 594 24 1006 630 24 1010 702 12 1014 714 12 1010 726 12 1041 738 12 1046 750 12 1050 762 12 1068 798 12 1082 822 12 1086 870 24 1095 930 24 1100 978 12 1122 990 12 1126 1014 12 1063 90 12 1068 126 12 1068 150 24 1073 174 12 1082 210 12 1032 222 24 1095 258 12 1104 282 12 1113 306 24 1117 342 12 1122 354 12 1149 438 12 1149 474 36 1158 522 12 1167 546 12 1167 570 24 1175 606 12 1185 654 48 1189 702 12 1220 114 12 1247 186 12 1193 222 12 1310 222 12 1261 282 12 1265 294 12 1288 318 12 1288 342 12 1292 354 12 1297 390 24 1306 426 12 1306 450 24 1310 486 24 1306 510 24 1310 546 12 1310 582 48 1306 642 12") +
  ticks(C, "233 372 12 228 408 36 223 456 12 217 492 12 212 540 24 206 576 24 185 672 12 170 744 12 159 780 24 149 840 36 144 912 24 138 948 12 133 960 12 128 972 24 254 1056 12 264 1092 12 275 1104 36 275 1152 12 411 408 12 411 444 12 400 480 12 394 504 24 394 552 12 381 600 12 379 612 12 373 660 12 368 672 12 363 684 12 352 708 12 347 732 12 352 744 12 332 828 12 332 864 24 337 888 12 321 936 12 357 948 12 426 996 12 431 1008 12 363 1032 12 458 1128 12 458 1152 12 467 1188 12 603 336 12 598 348 12 598 372 12 582 468 12 577 504 12 567 576 12 572 588 12 588 648 12 556 660 12 546 696 12 535 708 24 530 732 12 519 780 12 514 816 12 509 840 24 536 900 12 504 912 12 541 948 12 494 960 12 541 984 12 609 996 12 629 1044 24 634 1068 24 640 1128 12 650 1188 12") +
  ticks(C, "781 348 12 786 384 12 776 408 12 792 444 24 765 468 12 760 492 12 760 528 12 755 588 12 744 600 12 749 612 12 771 624 12 729 696 12 718 708 12 703 780 12 718 792 12 697 828 60 708 888 12 718 900 12 676 960 12 724 984 12 818 948 12 792 996 12 729 1032 12 812 1044 12 817 1056 48 823 1116 60 964 336 12 964 360 24 969 432 12 948 468 12 953 516 12 938 540 12 927 600 12 932 612 12 953 624 12 917 660 12 907 684 12 897 708 12 902 732 12 885 768 24 906 792 12 881 804 36 886 852 24 891 876 24 906 900 12 906 924 12 865 936 12 855 960 12 917 1032 12 1001 1068 48 1006 1128 24 1006 1164 12 1011 1176 12") +
  ticks(C, "1147 372 12 1157 444 12 1129 468 12 1126 480 24 1092 504 12 1136 516 24 1121 540 12 1126 576 12 1142 624 12 1077 708 12 1068 780 12 1095 792 12 1095 900 12 1037 972 12 1079 1008 12 1160 1020 12 1178 1044 24 1184 1068 36 1194 1128 24 1199 1152 12 1331 336 36 1315 468 12 1309 480 24 1319 516 24 1309 540 12 1335 552 12 1309 576 12 1315 588 12 1299 612 12 1304 648 12 1278 696 12 1262 708 12 1267 732 36 1278 792 12 1246 828 12 1278 900 12 1278 924 12 1283 984 12 1262 1008 12 1288 1032 12 1367 1056 48 1383 1152 24 1367 1188 12 1481 612 12 1466 672 12 1445 708 12 1450 732 24 1432 780 12 1471 792 12 1434 852 12 1440 864 12 1476 984 12 1442 1008 12 1476 1032 12") +
  ticks(D, "243 72 12 248 84 24 257 144 24 261 192 24 311 228 60 316 300 12 320 372 36 325 408 12 329 432 24 338 492 24 365 576 12 365 648 36 369 684 36 387 732 12 392 744 12 401 768 36 419 852 12 423 876 12 428 888 12 432 936 36 419 972 12 414 984 12 432 996 12 432 1044 36 437 1080 12 450 1104 12 450 1128 24 463 1188 12 401 60 12 405 84 24 410 120 12 414 144 12 419 168 12 419 192 24 472 252 12 477 324 24 503 348 12 513 432 12 499 444 12 517 456 24 432 540 12 535 588 12 535 624 48 558 756 12 575 768 12 584 816 12 602 840 12 611 876 12 611 912 12 624 924 24 633 948 36 638 1020 12 638 1044 12 638 1068 24 647 1092 12 652 1116 48") +
  ticks(D, "571 120 12 571 144 12 575 192 24 651 120 12 625 228 24 629 312 12 633 324 12 660 348 12 687 420 36 692 468 36 705 504 12 746 540 12 710 552 36 710 600 12 714 612 12 719 624 24 723 648 12 656 672 12 723 696 24 746 756 12 746 780 24 750 816 12 764 828 12 795 888 12 795 936 24 799 972 12 862 984 12 714 72 12 719 84 12 723 108 12 732 156 36 736 204 12 785 216 36 790 264 72 826 348 12 844 396 12 849 432 12 853 456 24 857 492 12 871 528 12 875 552 24 884 588 12 884 624 24 898 648 24 898 684 12 902 744 12 925 768 24 992 792 24 1001 816 24 1001 852 24 880 96 24 884 144 12 893 168 48 952 240 24 970 288 12 1037 276 12 988 312 12 997 360 12 1001 396 12 1006 420 12 1014 456 12 1037 492 12 1041 516 12 1064 540 12 1050 600 12 1082 636 24 1086 684 12 992 672 12 1100 744 24 1108 768 12") +
  ticks(D, "1032 60 24 1037 96 24 1046 144 24 1050 180 24 1055 204 12 1104 216 24 1109 240 24 1113 264 12 1131 288 12 1162 444 12 1180 456 36 1198 504 12 1220 540 12 1247 636 24 1158 672 12 1270 708 24 1275 756 24 1158 780 12 1162 816 24 1180 876 12 1185 924 12 1189 936 48 1203 1008 12 1225 1032 36 1279 1140 12 1283 1164 36 1292 1212 24 1301 1248 12 1306 1260 24 1306 1296 12 1193 96 12 1153 120 12 1120 84 12 1207 168 12 1211 180 24 1198 276 12 1265 216 24 1270 240 36 1409 780 12 1413 816 72 1422 900 24 1440 960 12 1449 1008 24 1453 1044 12 1471 1068 48 1476 1116 12 1480 1128 24 1485 1200 36 1538 1308 12 1547 1320 12 1552 1332 12 1552 1356 24") +
  ticks(E, "18 348 12 23 360 12 28 432 12 7 468 12 13 528 12 2 576 12 28 624 12 206 360 12 206 420 12 211 432 12 217 444 12 180 480 12 196 528 12 180 540 12 206 552 12 185 576 12 191 588 12 175 612 12 164 636 12 180 648 12 159 672 12 138 708 12 143 732 36 128 768 24 164 792 12 122 876 12 133 888 12 164 900 12 112 912 12 164 924 12 101 936 12 96 960 12 169 984 12 39 996 12 138 1008 12 169 1032 12 49 1044 12 60 1080 12 389 336 12 384 348 12 389 360 12 394 384 12 373 396 12 394 420 24 399 444 12 373 468 12 379 528 12 363 540 12 368 576 12 379 588 12 347 600 12 358 612 12 405 624 12 342 672 12 342 696 12 326 732 12 311 768 12 347 792 12 311 864 12 316 888 12 352 900 12 352 924 12 237 948 12 274 972 12 222 996 12 352 1032 12 243 1080 12 253 1128 12 259 1152 12 264 1164 12 248 1176 12") +
  ticks(E, "577 372 12 582 384 12 556 408 12 588 456 12 546 492 12 519 504 12 561 528 12 546 540 12 551 612 12 493 624 12 525 636 12 530 696 12 530 744 12 535 756 12 493 768 24 551 900 12 478 912 12 457 972 12 405 996 12 431 1104 12 436 1140 12 441 1152 12 446 1188 12 750 348 12 765 420 12 770 432 12 744 516 12 734 612 12 708 636 12 713 744 12 687 864 12 687 888 12 661 912 12 739 984 12 687 1008 12 593 1020 12 603 1056 12 608 1080 12 614 1092 12 625 1128 36 629 1188 12 943 360 12 917 612 12 875 720 12 865 780 12 826 960 12 823 972 12 875 1008 12 775 1020 12 786 1056 12 791 1080 12 1136 420 12 1110 468 12 1063 504 12 1121 528 12 1037 624 12 1152 648 12 1068 684 12 1152 792 12 1173 828 12 1021 840 12 1053 852 12 1058 864 12 1016 960 12 1178 1044 24 980 1092 12 1021 1152 24 1026 1176 12 1267 672 12 1424 708 12 1476 408 12 1497 372 12 1513 432 12") +
  ticks(F, "2 114 12 97 174 12 102 186 12 108 210 24 91 306 12 49 342 36 54 378 24 65 414 12 70 426 12 70 450 12 91 474 12 97 486 24 108 522 48 112 594 12 143 642 24 149 678 24 149 714 12 154 726 12 175 738 12 180 750 24 185 774 24 190 798 12 264 90 12 269 126 12 274 138 12 279 174 12 290 198 12 184 114 12 227 150 12 175 258 24 175 294 12 279 306 12 232 342 12 237 366 12 242 378 24 253 402 24 279 426 24 284 486 36 290 546 24 305 570 12 300 594 24 305 618 12 332 630 36 337 666 36 342 726 12 363 738 12 368 750 12 384 786 12 405 798 12 405 822 12 347 810 12") +
  ticks(F, "368 114 12 452 126 12 358 246 36 363 282 24 410 330 12 415 342 12 447 390 24 462 426 12 483 474 12 489 498 12 494 510 24 640 138 12 650 174 12 661 210 12 640 306 12 603 318 24 671 462 12 708 558 12 614 582 12 797 582 12 645 594 12 650 606 36 655 678 12 655 714 12 781 810 12 990 630 12 829 138 12 829 162 12 834 186 12 844 210 12 782 270 12 834 306 12 859 402 12 876 426 12 891 462 12 1095 126 12");

/* full-height mismatches at variant positions */
const snps: [string, string][] = [
  ["#d07000", ticks(A, "920 336 408 920 756 444") + ticks(B, "920 90 96 920 222 528 920 762 60") + ticks(C, "1063 336 840 1063 1188 12") + ticks(D, "911 60 564 911 672 12 911 768 120")],
  ["#00ff00", ticks(A, "1243 336 240 1243 624 12 1243 648 60 1243 732 12 1243 816 336 1498 336 492") + ticks(B, "1243 222 432 1243 738 12") + ticks(C, "995 336 864 1021 336 828 1105 336 864") + ticks(D, "853 60 396 853 516 372 853 984 12 876 120 156 876 288 204 876 540 36 876 636 252 947 60 156 947 276 492 947 792 96")],
  ["#ff0000", ticks(A, "1270 396 180 1270 624 12 1270 648 60 1270 732 12 1270 828 12 1270 852 300") + ticks(B, "1270 222 24 1270 318 336")],
  ["#0000ff", ticks(A, "1283 420 156 1283 624 12 1283 648 12 1283 672 36 1283 732 12 1283 828 12 1283 876 240 1283 1128 24 1476 336 492") + ticks(B, "1283 222 24 1283 354 84 1283 450 204") + ticks(C, "1251 336 864") + ticks(D, "1073 60 960")],
];

/* isolated mismatches, shaded by base quality: "x y ..." */
const dots = (t: Tile, src: string) => {
  const n = nums(src);
  let d = "";
  for (let i = 0; i + 1 < n.length; i += 2) d += ticks(t, `${n[i]} ${n[i + 1]} 12`);
  return d;
};
const singles: [string, string][] = [
  ["#7fd9a8", dots(A, "437 372 454 372 181 516 459 432 558 540 727 708 979 840 490 408") + dots(B, "347 90 362 174 915 630 1189 186 1229 630 1077 1014 691 990 687 918") + dots(C, "107 732") + dots(D, "629 432 782 708") + dots(E, "410 396 510 396 1100 564 1126 564 1126 624 1070 708 1084 708 1126 840 1110 756 588 744 682 744 969 1152") + dots(F, "237 546 557 462 629 402 629 162")],
  ["#40e060", dots(A, "396 372 629 588") + dots(B, "302 174 799 990 897 126") + dots(C, "446 708 891 816 1283 636") + dots(D, "477 660 333 1200 1059 864") + dots(E, "1142 384 520 396 577 744 692 732 1058 624 1126 660 1111 696") + dots(F, "896 582")],
  ["#00ff00", dots(A, "1233 372 1149 648") + dots(B, "342 174 396 174 620 462 1149 102") + dots(D, "239 564 477 588 920 96 441 1116") + dots(E, "896 480 640 672") + dots(F, "634 174")],
  ["#ce8a98", dots(A, "454 408 481 420 1068 648 781 876 768 876 727 876") + dots(B, "481 294 544 294 768 990 741 1062") + dots(C, "274 360 634 660 337 1092 1215 864 1183 996") + dots(D, "432 168 423 744 880 708 409 1200 512 1056") + dots(E, "222 780 755 684 821 696 1105 624 1126 708 1136 696 1105 768") + dots(F, "467 462 692 414 676 798")],
  ["#ff0000", dots(A, "136 564 772 876 561 1092") + dots(B, "593 138 638 390 1234 558 60 198") + dots(C, "60 336 311 360 138 816 138 828 1178 468 1168 516 1110 1176 1115 1176 1104 1176") + dots(D, "177 216 181 444 279 936 1010 492 499 1128 544 1056 1274 912") + dots(E, "347 504 473 600 846 696 851 696 656 936 1105 696 1366 504 1330 516 875 804") + dots(F, "473 174 499 282 619 582")],
  ["#8c9ce8", dots(A, "356 384 436 432 473 432 485 432 1082 360") + dots(B, "737 582") + dots(C, "1126 528 1361 396 1141 576") + dots(D, "983 648 1216 648") + dots(E, "342 540 138 780 556 876 1246 732") + dots(F, "222 486 248 486")],
  ["#5560f0", dots(A, "1068 360 428 432 549 540 208 888") + dots(B, "755 306") + dots(C, "206 408 1090 444 1230 576 901 660") + dots(D, "401 108 526 204 571 312 812 72 970 768 566 1056 1050 648") + dots(E, "1398 372 1110 432")],
  ["#0000ff", dots(A, "1054 1092 347 1164") + dots(B, "853 258 347 54") + dots(C, "1157 336 1006 540 1136 576 1298 672") + dots(D, "195 276 710 156 727 432 535 924 1139 396 1238 1212") + dots(E, "13 972 844 732") + dots(F, "750 162")],
  ["#d07000", dots(A, "414 528 876 564 1301 924") + dots(B, "459 162 858 174") + dots(C, "305 1068 149 1188 1403 624") + dots(D, "127 48 697 156 840 540 925 624 293 720 383 756 732 984 1427 1356") + dots(E, "598 336 582 636 906 888 44 960 405 1032 409 1032 457 1032 483 1032 7 1116 1230 924") + dots(F, "802 102 650 486 807 510 222 594")],
  ["#c39a68", dots(A, "1121 348 1135 348 1158 348 1230 348 951 600 790 1104 918 1080") + dots(B, "763 126 643 558 1230 318 1059 246") + dots(C, "441 444 614 720 112 1032 102 1032 128 1032 143 1032 159 1032 201 1080 1335 768 1366 1044 1403 1152 1418 1152 1475 1152 1483 1152") + dots(D, "302 492 266 564 270 564 441 384 1025 384 799 252 660 276 494 1056") + dots(E, "284 492 489 396 676 516 943 540 964 540 1058 540 279 768 1048 840 436 1032 227 1032 415 1092 770 1152 843 1140 525 624 1048 624") + dots(F, "373 438 373 534 326 570 143 594 321 774")],
];

/* insertion markers: dark core with a shaded frame */
const blobs: [Tile, number, number][] = [
  [E, 1309, 468], [E, 661, 672], [E, 1139, 672], [E, 1108, 708], [E, 1142, 744], [E, 1131, 756], [E, 1267, 900],
];

const Stack = ({ y, n }: { y: number; n: number }) => (
  <g>
    <rect x="446" y={y} width="20" height={n * 4} fill="#6f7f8c" />
    {Array.from({ length: n }, (_, i) => (
      <rect key={i} x="448" y={y + i * 4 + 1} width="16" height="3" fill="#000" />
    ))}
  </g>
);

const exonBars = [[57, 167], [172, 277], [282, 392], [397, 507], [512, 617], [622, 732], [737, 841], [847, 956], [962, 1066], [1186, 1291]];

const Coverage = () => (
  <svg className="block" width="2144" height="78" viewBox="410 284 2144 78" shapeRendering="crispEdges">
    <path d={coverage} fill="#afafaf" />
    <path d={ticks(A, "920 113 156") + ticks(C, "1063 114 156")} fill="#d07000" />
    <path d={ticks(A, "1243 150 120 1498 222 48") + ticks(C, "995 102 168 1021 102 168 1105 102 168")} fill="#00ff00" />
    <path d={ticks(A, "1270 174 96")} fill="#ff0000" />
    <path d={ticks(A, "1283 186 84 1476 222 48") + ticks(C, "1251 78 192")} fill="#0000ff" />
  </svg>
);

const Alignments = () => (
  <svg className="block" width="2144" height="816" viewBox="410 364 2144 816" shapeRendering="crispEdges">
    {exonBars.map(([a, b]) => (
      <rect key={a} x={px(C, a)} y="366" width={px(C, b) - px(C, a)} height="6" fill="#000" />
    ))}
    <path d={reads} fill="#b2cde3" />
    {snps.map(([fill, d]) => <path key={fill} d={d} fill={fill} />)}
    <path d={gaps} fill="#fafafa" />
    <path d={clips} fill="#404040" />
    {singles.map(([fill, d]) => <path key={fill} d={d} fill={fill} />)}
    {blobs.map(([t, x, y], i) => (
      <g key={i}>
        <rect x={px(t, x) - 3} y={py(t, y)} width="6" height="4" fill="#5b6a76" />
        <rect x={px(t, x) - 1} y={py(t, y)} width="3" height="3" fill="#000" />
      </g>
    ))}
    <Stack y={422} n={9} />
    <Stack y={702} n={4} />
    <line x1="1481" x2="1481" y1="382" y2="1112" stroke="#000" strokeWidth="2" strokeDasharray="2 2" />
    <line x1="1480.5" x2="1480.5" y1="382" y2="1112" stroke="#000" strokeOpacity="0.45" strokeWidth="1" />
  </svg>
);

const labels: [number, string][] = [
  [1, "1,413,200 bp"], [3, "1,413,400 bp"], [5, "1,413,600 bp"], [7, "1,413,800 bp"], [9, "1,414,000 bp"], [11, "1,414,200 bp"],
  [13, "1,414,400 bp"], [15, "1,414,600 bp"], [17, "1,414,800 bp"], [19, "1,415,000 bp"], [21, "1,415,200 bp"], [23, "1,415,400 bp"],
];
/* every 100 bp, snapped to even pixels */
const tickX = (i: number) => 496 + 86 * i - (i >= 3 ? 2 : 0) - (i >= 21 ? 2 : 0);

const Ruler = () => (
  <svg className="block" width="2144" height="132" viewBox="410 106 2144 132">
    <rect x="411" y="107" width="2142" height="130" fill="none" stroke="#c8c8d2" strokeWidth="2" />
    <g shapeRendering="crispEdges">
      <path d="M412 158H1416V160H412ZM1550 158H2552V160H1550Z" />
      <path d="M418 156H424V154H430V164H424V162H418ZM2548 156H2542V154H2534V164H2542V162H2548Z" />
      {Array.from({ length: 24 }, (_, i) => <rect key={i} x={tickX(i)} y="218" width="2" height="18" />)}
    </g>
    <g fontFamily="Liberation Sans, Arial, sans-serif" fontWeight="700" textAnchor="middle">
      <text x="1482" y="168" fontSize="24">2,497 bp</text>
      <g fontSize="18">
        <text x="464" y="208" textAnchor="end">000 bp</text>
        {labels.map(([i, t]) => <text key={t} x={tickX(i) + 1} y="208">{t}</text>)}
      </g>
    </g>
  </svg>
);

const headings: [number, number, string][] = [
  [352, 253, "ÈCñ ÏCqaz(*®"], [352, 120, "¢°¬jKµ0%"], [352, 33, "?ÂûÄ"],
  [373, 253, "^"], [373, 221, "%\\~"], [373, 165, "Î*"], [373, 139, "0Öè`äXrê"], [373, 43, "TÏÐS"],
  [396, 253, "É"], [396, 188, "ä³²üô4\""], [396, 114, "ÌDæ'm"], [396, 22, "´"], [396, 12, "ê"],
];

const Headings = () => (
  <svg className="block" width="64" height="252" viewBox="332 6 64 252" fontFamily="Liberation Sans, Arial, sans-serif" fontSize="18" fill="#222">
    {headings.map(([x, y, t]) => (
      <text key={`${x}-${y}`} transform={`translate(${x} ${y}) rotate(-90)`}>{t}</text>
    ))}
  </svg>
);

const Columns = () => (
  <div className="flex h-full">
    <div className="w-[22px] border-r-2 border-[#bfbfbf]" />
    <div className="w-[22px] border-r-2 border-[#bfbfbf]" />
  </div>
);

export default function App() {
  return (
    <div className="flex h-[1360px] w-[2560px] flex-col overflow-hidden bg-[#fafafa] font-['Liberation_Sans',Arial,sans-serif] text-[#1a1a1a]">
      <div className="h-0.5 shrink-0 bg-[#808080]" />
      <div className="h-0.5 shrink-0 bg-[#666666]" />

      <div className="flex h-[256px] shrink-0">
        <div className="w-[320px] border-2 border-black" />
        <div className="ml-[10px] w-[68px] overflow-hidden border-2 border-black"><Headings /></div>
        <div className="ml-[10px] w-[2148px] border-2 border-[#808080]">
          <div className="relative mt-[30px] h-[22px] border-y-2 border-l-2 border-black bg-white">
            <div className="absolute -top-[6px] left-[1792px] h-[30px] w-3 bg-[#ff0000]" />
          </div>
          <div className="mt-12"><Ruler /></div>
          <div className="h-5 border-t-2 border-l-2 border-black" />
        </div>
        <div className="flex-1 bg-[#f4f4f4]" />
      </div>
      <div className="h-1 shrink-0 bg-[#666666]" />

      <div className="flex h-2 shrink-0">
        <div className="w-[320px] border-2 border-b-0 border-black" />
        <div className="ml-[10px] w-[68px] border-2 border-b-0 border-black"><Columns /></div>
        <div className="ml-[10px] w-[2148px] border-2 border-b-0 border-[#808080]" />
        <div className="flex-1 bg-[#eeeeee]" />
      </div>
      <div className="h-0.5 shrink-0 bg-[#666666]" />
      <div className="h-1.5 shrink-0" />
      <div className="h-0.5 shrink-0 bg-[#666666]" />

      <div className="flex h-[1076px] shrink-0 bg-[#eeeeee]">
        <div className="flex w-[320px] flex-col overflow-hidden border-2 border-black bg-white text-[19px] leading-6 tracking-[0.95px] whitespace-nowrap">
          <div className="flex h-[78px] items-center bg-[#fafafa] pl-2">7G8.msp34.sorted.bam Coverage</div>
          <div className="flex h-[798px] items-center bg-[#c0c0c0] pt-1.5 pl-2">7G8.msp34.sorted.bam</div>
        </div>
        <div className="ml-[10px] w-[68px] border-2 border-black bg-white"><Columns /></div>
        <div className="ml-[10px] w-[2148px] border-2 border-[#808080] bg-[#fafafa]">
          <div className="relative h-[78px]">
            <Coverage />
            <span className="absolute top-[3px] left-2 text-[15px] leading-5">[0 - 184]</span>
          </div>
          <div className="h-0.5 bg-[#808080]" />
          <Alignments />
          <div className="h-0.5 bg-[#c8c8c8]" />
        </div>
      </div>
      <div className="h-0.5 shrink-0 bg-[#666666]" />
    </div>
  );
}
